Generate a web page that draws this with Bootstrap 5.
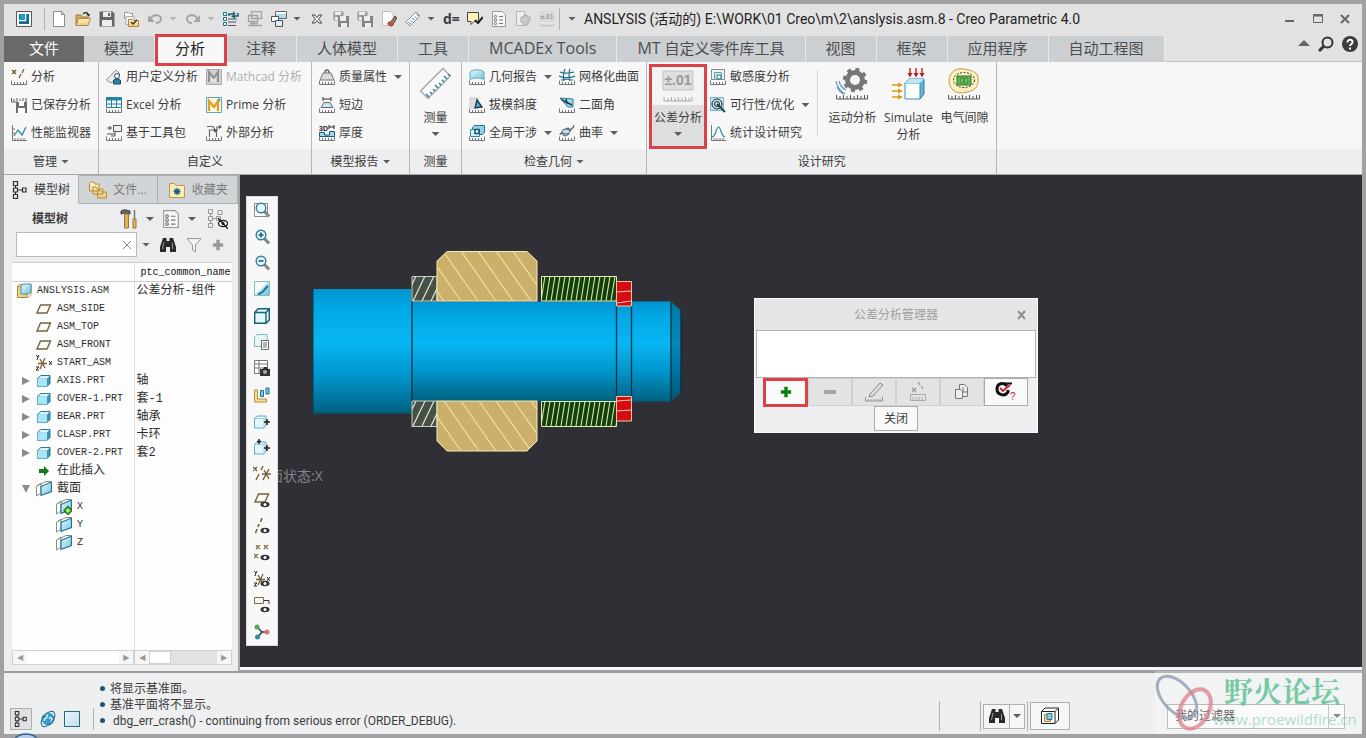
<!DOCTYPE html>
<html lang="zh-CN">
<head>
<meta charset="utf-8">
<meta name="viewport" content="width=device-width, initial-scale=1">
<title>ANSLYSIS - Creo Parametric 4.0</title>
<link href="https://cdn.jsdelivr.net/npm/bootstrap@5.3.0/dist/css/bootstrap.min.css" rel="stylesheet">
<style>
:root{--ui:"Open Sans","Noto Sans CJK SC",sans-serif;--narrow:Roboto,"Noto Sans CJK SC",sans-serif;--line:#b4b6b8;--mark:#db4146}
body{font:12px/16px var(--ui);color:#3c3c3c;background:#a1a1a1;overflow:hidden}
.shell{min-height:100vh;padding:4px}
.btn{--bs-btn-padding-x:0;--bs-btn-padding-y:0;--bs-btn-border-width:0;--bs-btn-border-radius:0;--bs-btn-font-size:12px;--bs-btn-line-height:16px;--bs-btn-color:#3c3c3c;--bs-btn-disabled-opacity:1}
svg{display:block;flex:none;fill:none}
.ic{width:16px;height:16px}
.ic-lg{width:34px;height:34px}
.tri{width:8px;height:4px;background:#5c5c5c;clip-path:polygon(0 0,100% 0,50% 100%);flex:none;display:block}
.tri-soft{background:#b5b5b5}
.redbox{position:absolute;border:3px solid var(--mark);pointer-events:none}
/* title bar */
.titlebar{height:32px;background:#e2e2e2;padding:0 12px 3px;gap:8px}
.titlebar .tri{margin-left:-2px}
.titlebar .vsep{margin:0 -2px 0 4px}
.titlebar .vsep.tail{margin:0 2px 0 -4px}
.vsep{width:1px;height:22px;background:#b0b0b0;flex:none}
.app-title{font:14px/20px var(--narrow);color:#222}
.dformula{font-weight:700;font-size:14px;line-height:16px;width:16px}
/* ribbon tabs */
.tabstrip{height:26px;background:#e2e2e2;border-bottom:1px solid #c3c5c6}
.tabstrip .nav-link{padding:0 20px;height:26px;line-height:24px;font-size:15px;color:#4b4e50;background:#cccfd2;border-right:1px solid #e9eaea;border-radius:0;position:relative;white-space:nowrap}
.tabstrip .file{background:#696969;color:#fff;padding:0 25px;border:0}
.tabstrip .active{background:#f7f7f7;color:#222}
.tabstrip .redbox{inset:-2px -2px -4px 0;z-index:2}
.tabstrip .latin{font-size:16px}
.helpers{gap:8px;padding-right:4px}
/* ribbon */
.ribbon{background:linear-gradient(#f7f7f7 87px,#eceef0 87px);border-bottom:1px solid #a8a8a8}
.grp{border-right:1px solid var(--line)}
.grp-body{height:87px;padding:0 7px}
.grp-name{height:25px;line-height:25px;text-align:center}
.cmds{display:grid;grid-template-rows:repeat(3,28px);grid-auto-flow:column;column-gap:7px;padding-top:1px}
.custom .cmds{column-gap:8px;padding-right:2px}
.cmd{display:flex;align-items:center;gap:4px;text-align:left;white-space:nowrap}
.cmd .tri{margin-left:3px}
.cmd:disabled{color:#aeb0b2}
.big{display:flex;flex-direction:column;align-items:center;width:56px;padding-top:5px;line-height:17px}
.measure{width:51px}
.big .ic-lg{margin-bottom:8px}
.big .tri{margin-top:6px}
.tol{width:58px;padding-top:2px;margin:2px 3px 0 -5px;background:linear-gradient(#f4f4f4 38px,#dcdee0 38px);border:3px solid var(--mark);height:85px}
.tol .ic-lg{margin-bottom:6px}
.divide{height:66px;margin:8px 6px 0 8px;opacity:.5}
.study{padding-right:4px}
/* side panel */
.side{width:236px;background:#ebedef;border-right:2px solid #a6a6a6;flex:none}
.sidetabs .btn{flex:1 1 82px;height:29px;gap:6px;display:flex;align-items:center;justify-content:center;color:#77797b;background:#d2d5d8;border:1px solid #aeb0b2;border-left-width:0}
.sidetabs .btn.on{flex-basis:77px;background:#ebedef;color:#3c3c3c;border-color:#ebedef #aeb0b2 #ebedef}
.treehead{padding:5px 10px 0 28px;gap:8px}
.finder{padding:3px 0 0 12px;gap:10px}
.finder>.tri{margin-left:-5px}
.search{width:121px;border:1px solid #b8babc;background:#fff;height:25px}
.search input{border:0;width:100px;outline:0;background:none}
.dim{--bs-btn-color:#999}
.treebox{background:#fdfdfd;margin:5px 6px 6px 8px}
.tree{table-layout:fixed;width:100%;height:100%;border-collapse:collapse;font:10px/12px "Liberation Mono","Noto Sans CJK SC",monospace;color:#2e2e2e}
.tree th,.tree td{height:18px;padding:0;white-space:nowrap;overflow:hidden;font-weight:400}
.tree th{height:19px;border-bottom:1px solid #c9cbcd;border-top:1px solid #c9cbcd;padding:2px 0 0 6px;color:#111}
.tree th+th,.tree td+td{border-left:1px solid #dcdedf}
.tree td+td{padding-left:2px;font-size:12px}
.tree .zh{font-size:12px}
.tree .rest td{height:auto}
.node{display:flex;align-items:center;gap:5px;height:18px}
.lv0{padding-left:4px}.lv1{padding-left:24px}.lv2{padding-left:44px}.exp{padding-left:9px}
.twist{width:10px;height:10px}
.sbar{flex:97;height:15px;background:#e0e2e3;border:1px solid #cfd1d3;display:flex;justify-content:space-between}
.sbar-tree{flex:122;background:#fff}
.sbar span{width:14px;background:#f6f6f6;color:#999;font:8px/13px "DejaVu Sans",sans-serif;text-align:center}
.sbar .thumb{width:22px;background:#fff;border:1px solid #cfd1d3}
/* graphics area */
.view{background:#302f36;position:relative;border-bottom:3px solid #f6f6f6;margin-bottom:1px}
.viewbar{width:32px;min-height:450px;background:#f8f8f9;border:1px solid #dcdcdc;margin:21px 34px 0 6px;position:relative;z-index:1}
.model{width:372px;height:202px;margin-top:75px}
.statelabel{position:absolute;left:29px;top:291px;font-size:14px;line-height:20px;color:#84848a}
.dlg{position:absolute;left:514px;top:123px;width:284px;background:#eeeff0;border:1px solid #fafafa;padding:0 1px 1px}
.dlg-title{height:31px;background:#e5e6e7;color:#9d9fa1;margin:0 -1px;position:relative}
.dlg-title .btn{position:absolute;right:11px;top:8px}
.dlg textarea{display:block;width:100%;height:48px;border:1px solid #b0b2b4;resize:none;outline:0;background:#fff}
.tools .btn{width:44px;height:28px;display:flex;align-items:center;justify-content:center;background:#e2e3e4;border:1px solid #cdcfd1;position:relative}
.tools .lit,.closebtn{background:#f9f9f9!important;border:1px solid #a9abad!important}
.tools .add{color:#0f7d14}
.tools .redbox{inset:-1px -1px -2px -2px;z-index:1}
.closebtn{width:44px;height:25px}
/* status bar */
.status{background:#edeff1;border-top:2px solid #9b9b9b;height:63px;position:relative}
.toggles{gap:7px;padding:0 8px 4px 6px}
.toggles .vsep{margin-left:6px}
.toggles .sq{width:22px;height:22px;background:#dfe1e3}
.msgs{font-family:var(--narrow);padding-bottom:5px;margin-left:-2px}
.msgs li{line-height:16px;padding-left:10px;position:relative}
.msgs li::before{content:"";position:absolute;left:0;top:5px;width:5px;height:5px;border-radius:50%;background:#1f5468}
.sq{border:1px solid #aeb0b2;background:#f5f6f7;display:flex;align-items:center;justify-content:center}
.picks{gap:2px;padding:0 17px 3px 0}
.picks .vsep{height:30px}
.picks .vsep:first-child{margin-right:38px}
.find{width:27px;height:25px}
.findopt{width:15px;border-left:0}
.pick{width:40px;height:28px;margin-right:95px}
.filter{width:178px;height:25px;font-size:12px;line-height:16px;border:1px solid #a0a2a4;border-radius:0;background:#f8f8f8 linear-gradient(#b0b2b4,#b0b2b4) right 15px top 0/1px 100% no-repeat;padding:0 7px;color:#222;appearance:none}
.logo{position:absolute;right:0;top:-2px;width:207px;height:63px;background:#ffffff48;overflow:hidden;pointer-events:none}
.logo-name{position:absolute;left:69px;top:2px;font:700 29px/36px "Noto Serif CJK SC","Noto Sans CJK SC",serif;color:#48bb83bb;white-space:nowrap}
.logo-url{position:absolute;left:58px;top:38px;font:15px/20px var(--ui);color:#6cc4a08c}
.orb{position:absolute;left:10px;bottom:-1px;z-index:3}
</style>
</head>
<body>
<svg width="0" height="0" class="position-absolute" aria-hidden="true">
<defs>
<linearGradient id="gb" x1="0" y1="0" x2="1" y2="1"><stop stop-color="#eafaff"/><stop offset="1" stop-color="#6fc3de"/></linearGradient>
<linearGradient id="gy" x1="0" y1="0" x2="0" y2="1"><stop stop-color="#fdf3c8"/><stop offset="1" stop-color="#edc879"/></linearGradient>
<linearGradient id="gs" x1="0" y1="0" x2="0" y2="1"><stop stop-color="#0294cf"/><stop offset=".15" stop-color="#00a8e4"/><stop offset=".42" stop-color="#08b6f4"/><stop offset=".7" stop-color="#0095cb"/><stop offset="1" stop-color="#00607f"/></linearGradient>
</defs>
</svg>
<svg class="d-none" aria-hidden="true">
<symbol id="rul" viewBox="0 0 16 16"><path d="M.5 11.500V15.500H15.500V11.500M3.500 15v-2M6.500 15v-2M9.500 15v-2M12.500 15v-2" stroke="#777"/></symbol>
<symbol id="app" viewBox="0 0 16 16"><path d="M.5.5h15v15H.5z" fill="#fff" stroke="#555"/><path d="M3 3h10v10H3z" fill="#126b8f"/><path d="M3 9.500h6.500V3" stroke="#fff" stroke-width="1.500"/><path d="M4 3h5v6H4z" fill="#1a9ed0"/></symbol>
<symbol id="new" viewBox="0 0 16 16"><path d="M2.500.5h8l3 3v12h-11z" fill="#fff" stroke="#8d8d8d"/><path d="M10.500.5v3h3" stroke="#8d8d8d"/></symbol>
<symbol id="open" viewBox="0 0 16 16"><path d="M1 14V4h5l1 2h6v2" fill="#dba84f" stroke="#a9803a"/><path d="M1 14.500 3.500 7.500h12L13 14.500z" fill="url(#gy)" stroke="#b38a41"/><path d="M8 3c2-2 4-2 5 0" stroke="#333" stroke-width="1.500"/><path d="M11 3h4l-1 3z" fill="#333"/></symbol>
<symbol id="save" viewBox="0 0 16 16"><path d="M.5.5h13l2 2v13H.5z" fill="#666" /><path d="M4 1h8v5H4zM3 9h10v6H3z" fill="#eee"/><path d="M9 2h2v3H9z" fill="#666"/></symbol>
<symbol id="fchk" viewBox="0 0 16 16"><path d="M1.500 1.500h4l1 1h3v5h-8z" fill="#fff" stroke="#999"/><path d="M3 5.500h8v8H3z" fill="#f6f6f6" stroke="#aaa"/><path d="M5.500 15.500v-7h4l1 1h5v6z" fill="url(#gy)" stroke="#b08a3c"/><path d="m8 11 2 2 4-4" stroke="#333" stroke-width="1.500"/></symbol>
<symbol id="undo" viewBox="0 0 16 16"><path d="M3 8c4-6 11-4 11 0 0 3-3 4-5 4" stroke="#a5a5a5" stroke-width="2"/><path d="M1 4v7h7z" fill="#a5a5a5"/></symbol>
<symbol id="redo" viewBox="0 0 16 16"><path d="M13 8C9 2 2 4 2 8c0 3 3 4 5 4" stroke="#a5a5a5" stroke-width="2"/><path d="M15 4v7H8z" fill="#a5a5a5"/></symbol>
<symbol id="regen" viewBox="0 0 16 16"><path d="M.5 1.500h3v3h-3zM.5 6.500h3v3h-3zM.5 11.500h3v3h-3z" fill="#fff" stroke="#1b7390"/><path d="M5 8h9M5 11h8M5 14.500h8" stroke="#555"/><path d="M6 5V3h5M15 2v3h-5" stroke="#17607a" stroke-width="1.500"/><path d="m10 0 3 3-3 2zM12 3 8 5l4 3z" fill="#17607a"/></symbol>
<symbol id="mon" viewBox="0 0 16 16"><path d="M4.500.5h10v7h-10zM1.500 4.500h9v6h-9zM1 14.500h14M6 10v4M3 12.500h8" stroke="#a3a3a3" stroke-width="1.300"/></symbol>
<symbol id="wins" viewBox="0 0 16 16"><path d="M4.500.5h11v7h-11z" fill="#fff" stroke="#666"/><path d="M5 3h10v4H5z" fill="#a5dced"/><path d="M.5 5.500h7v5h-7z" fill="#fff" stroke="#555"/><path d="M4.500 9.500h7v6h-7z" fill="#d5f1f9" stroke="#555"/></symbol>
<symbol id="xo" viewBox="0 0 16 16"><path d="M3 4h3l2 2.500L10 4h3l-3.500 4L13 12h-3L8 9.500 6 12H3l3.500-4z" fill="#fff" stroke="#444"/></symbol>
<symbol id="dsk" viewBox="0 0 16 16"><path d="M.5.5h10v9H.5z" fill="#9a9a9a"/><path d="M2 1h6v3H2zM2 6h6v3H2z" fill="#eee"/><path d="M5 5h11v11H5z" fill="#858585"/><path d="M7 5h6v5H7zM8 12h6v4H8z" fill="#eee"/></symbol>
<symbol id="ers" viewBox="0 0 16 16"><path d="M1.500.5h8l3 3v11h-11z" fill="#fff" stroke="#bbb"/><path d="m8 13 6-8 2 2-5 8z" fill="#9c7658" stroke="#6a4b36"/><path d="m6 13 2-3 4 3-2 3z" fill="#c44"/></symbol>
<symbol id="rlr" viewBox="0 0 34 34"><path d="M1.500 24 24 1.500 31.500 9 9 31.500z" fill="#fbfcfc" stroke="#a5a5a5" stroke-width="1.300"/><path d="m10 30-3-3m6 0-2-2m5-1-2-2m5-1-3-3m6 0-2-2m5-1-2-2m5-1-3-3m6 0-2-2" stroke="#277891" stroke-width="1.400"/></symbol>
<symbol id="rls" viewBox="0 0 16 16"><path d="m.7 11 10.300-10 4 4L5 15z" fill="#fbfcfc" stroke="#8a8a8a"/><path d="m5.500 13-2-2m4 0-1.500-1.500m3.500-.5-2-2m4 0L10 5.500m3.500-.5-2-2" stroke="#277891"/></symbol>
<symbol id="tgchk" viewBox="0 0 16 16"><path d="M.5 1.500h11v9H7l-3 3v-3H.5z" fill="#fff4b8" stroke="#444"/><path d="m8 9 3 3 5-6" stroke="#222" stroke-width="2"/></symbol>
<symbol id="lst" viewBox="0 0 16 16"><path d="M1.500.5h10l3 3v12h-13z" fill="#f7f7f7" stroke="#999"/><circle cx="4.500" cy="5.500" r="1.200" stroke="#777"/><circle cx="4.500" cy="9" r="1.200" stroke="#777"/><circle cx="4.500" cy="12.500" r="1.200" stroke="#777"/><path d="M8 5.500h4M8 9h4M8 12.500h4" stroke="#777"/></symbol>
<symbol id="puz" viewBox="0 0 16 16"><path d="M1.500.5h8v14h-8z" fill="#eee" stroke="#b5b5b5"/><path d="M6 6h3V4h3v2h3v4h-2v4H8v-3H6z" fill="#ccc" stroke="#aaa"/></symbol>
<symbol id="pm" viewBox="0 0 34 34"><path d="M2 2h30v19H2z" fill="#dedede" stroke="#c2c2c2"/><path d="M3 28v4h28v-4M7 32v-3M10.500 32v-4M14 32v-3M17.500 32v-4M21 32v-3M24.500 32v-4M28 32v-3" stroke="#aaa"/><text x="17" y="16" text-anchor="middle" font-family="Liberation Sans" font-size="14" font-weight="700" fill="#999">±.01</text></symbol>
<symbol id="ana" viewBox="0 0 16 16"><path d="m1 1 4 4M5 1 1 5" stroke="#805b30" stroke-width="1.500"/><path d="m13 0-2 4M10 5 8 9" stroke="#805b30" stroke-width="1.300"/><use href="#rul"/></symbol>
<symbol id="sav2" viewBox="0 0 16 16"><path d="M.5 1v4h6M3 4V2M6 4V1M9 4V2M12 4V1M15 5V1" stroke="#555"/><path d="M5 5h11v11H5z" fill="#6d6d6d"/><path d="M8 5h5v4H8zM7 11h7v5H7z" fill="#fff"/></symbol>
<symbol id="perf" viewBox="0 0 16 16"><path d="M1.500 0v15.500H16M4 15v-2M7 15v-2M10 15v-2M13 15v-2M2 4h2M2 8h2" stroke="#777"/><path d="m3 11 4-6 4 5 4-8" stroke="#278aa4" stroke-width="1.300"/></symbol>
<symbol id="usr" viewBox="0 0 16 16"><path d="M.5 11 10 1l4 4-9 9z" fill="#eee" stroke="#888"/><circle cx="11" cy="7" r="2.500" fill="#fff" stroke="#346"/><path d="M7.500 15v-3c0-3 7-3 7 0v3z" fill="#2b83ad" stroke="#245"/></symbol>
<symbol id="xls" viewBox="0 0 16 16"><path d="M.5.5h15v10H.5z" fill="#fff" stroke="#267f9b"/><path d="M.5.5h15v3H.5z" fill="#1e86a8"/><path d="M.5 7h15M5.500.5v10M10.500.5v10" stroke="#267f9b"/><use href="#rul"/></symbol>
<symbol id="kit" viewBox="0 0 16 16"><path d="M7.500.5h8v6h-8z" fill="#eee" stroke="#555"/><path d="M1 3h5M1 9h8M4 1v4" stroke="#555" stroke-width="1.200"/><path d="M9 7v4H5" stroke="#555"/><use href="#rul"/></symbol>
<symbol id="mcd" viewBox="0 0 16 16"><path d="M.5.5h15v15H.5z" fill="#d3d3d3" stroke="#aaa"/><path d="M3 13V3l5 6 4-6v10" stroke="#909090" stroke-width="2"/><path d="M6 13V9M9 13V9" stroke="#fff"/></symbol>
<symbol id="prm" viewBox="0 0 16 16"><path d="M.5.5h15v15H.5z" fill="#fff8e2" stroke="#5ba8c0"/><path d="M3 14V4l5 6 4-6v10" stroke="#e0a126" stroke-width="2.300"/><circle cx="13" cy="3" r="1.500" fill="#5a9"/></symbol>
<symbol id="ext" viewBox="0 0 16 16"><path d="M1 1.500h6l2 3M15 2h-4v4M3.500 12V5h7v7" stroke="#666" stroke-width="1.200"/><path d="m13 0 3 2-3 2zM7 5l4-1-2 4z" fill="#555"/><use href="#rul"/></symbol>
<symbol id="mass" viewBox="0 0 16 16"><path d="m1 11 3-7h8l3 7z" fill="#d9dcde" stroke="#777"/><path d="M6 4C6 0 10 0 10 4" stroke="#666" stroke-width="1.500"/><use href="#rul"/></symbol>
<symbol id="edge" viewBox="0 0 16 16"><path d="M4 0v4M12 0v4M4 2h8" stroke="#333"/><path d="M5 5.500h6l3 5H2z" fill="#c5e9f3" stroke="#667"/><use href="#rul"/></symbol>
<symbol id="thk" viewBox="0 0 16 16"><text x="0" y="6" font-family="Liberation Sans" font-size="7" font-weight="700" fill="#222">3D</text><path d="M10 0v4M15 0v4M10 2h5" stroke="#222"/><path d="M.5 7.500h5V10h5V6.500h5v5h-15z" fill="#9ed8ea" stroke="#175d76"/><use href="#rul"/></symbol>
<symbol id="geo" viewBox="0 0 16 16"><path d="M1 10.500V3c3-3 11-3 14 0v7.500c-4-2-10-2-14 0z" fill="url(#gb)" stroke="#6aa"/><use href="#rul"/></symbol>
<symbol id="drf" viewBox="0 0 16 16"><path d="M1 11V1h8v10z" fill="#ddd" stroke="#ccc"/><path d="m6 11 2-8 5 7z" fill="#49a8ca" stroke="#1c3e4c" stroke-width="1.400"/><use href="#rul"/></symbol>
<symbol id="glb" viewBox="0 0 16 16"><path d="M5.500.5h10v7l-2 2h-10v-7z" fill="#8fd1e6" stroke="#1b7694"/><path d="M1.500 4.500h9v7h-9z" fill="#d6f1f8" stroke="#2d8aa6"/><path d="M6 4.500h4v4H6z" fill="#fff" stroke="#14546a" stroke-width="1.500"/><use href="#rul"/></symbol>
<symbol id="mesh" viewBox="0 0 16 16"><path d="M1 3c4 2 10 1 14 0M0 7c5 2 11 2 16 0M2 11c4-1 8-1 12 0M6 0C4 4 4 8 5 12M11 0c-2 4-1 8 0 12" stroke="#1e7188" stroke-width="1.200"/><use href="#rul"/></symbol>
<symbol id="dih" viewBox="0 0 16 16"><path d="m1 1 13 1v8H9z" fill="#a3dced" stroke="#2a7a95"/><path d="m2 2 6 4-1-4M5 4l8 4" stroke="#173c4b" stroke-width="1.400"/><use href="#rul"/></symbol>
<symbol id="crv" viewBox="0 0 16 16"><path d="M1 10c0-5 14-3 14-10M2 8l4 3 4-2M5 5l4-2 3 3" stroke="#566e7c" stroke-width="1.300"/><ellipse cx="7" cy="6.500" rx="4" ry="2.500" fill="#bfdde9" stroke="#567"/><use href="#rul"/></symbol>
<symbol id="sen" viewBox="0 0 16 16"><path d="M1.500.5h13v10h-13z" fill="#f3f3f3" stroke="#888"/><path d="M4.500 3.500h7v7h-7z" fill="#d3edf4" stroke="#5e9fb2"/><path d="M7 6h4v4H7z" fill="#fff" stroke="#278"/><use href="#rul"/></symbol>
<symbol id="opt" viewBox="0 0 16 16"><path d="M.5.5h13v13H.5z" fill="#c7e6ef" stroke="#79b8ca"/><circle cx="7" cy="7" r="5" stroke="#222"/><circle cx="7" cy="7" r="2.500" stroke="#222"/><path d="m7 7 8 8" stroke="#1c4455" stroke-width="2"/></symbol>
<symbol id="sta" viewBox="0 0 16 16"><path d="M1.500 0v15.500H16M4 15v-2M7 15v-2M10 15v-2M13 15v-2" stroke="#777"/><path d="M2 12C6 12 6 2 8.500 2S11 12 15 12" stroke="#2c87a0" stroke-width="1.200"/></symbol>
<symbol id="motn" viewBox="0 0 34 34"><circle cx="20" cy="13" r="7.500" stroke="#777" stroke-width="5"/><circle cx="20" cy="13" r="10.500" stroke="#777" stroke-width="3.500" stroke-dasharray="4 4.250"/><path d="M1 14c1 6 4 10 9 13M4 14c1 4 3 7 7 9M2 20c2 4 3 5 6 7" stroke="#5a9ab4" stroke-width="1.200"/><path d="M1.500 28v4h31v-4M5 32v-3M8.500 32v-4M12 32v-3M15.500 32v-4M19 32v-3M22.500 32v-4M26 32v-3M29.500 32v-4" stroke="#555"/></symbol>
<symbol id="simu" viewBox="0 0 34 34"><path d="m14 16 4-4h15v15l-4 5z" fill="#62b6d3" stroke="#2b7b9b"/><path d="M14 16h15v16H14z" fill="#fbfeff" stroke="#3692b2"/><path d="m14 16 4-4h15l-4 4z" fill="#bce6f2"/><path d="M19 1v8M25 1v8M31 1v8" stroke="#c62b2b" stroke-width="1.500"/><path d="m16.500 6 2.500 4.500L21.500 6zm6 0 2.500 4.500L27.500 6zm6 0 2.500 4.500L33.500 6z" fill="#b61f1f"/><path d="M1 18h8M1 24h8M1 30h8" stroke="#d99b19" stroke-width="1.500"/><path d="m7 15.500 5 2.500-5 2.500zm0 6 5 2.500-5 2.500zm0 6 5 2.500-5 2.500z" fill="#d99b19"/></symbol>
<symbol id="elec" viewBox="0 0 34 34"><path d="M3 9C5 3 12 1 17 2s13 2 14 8-1 12-7 14-14 3-18-1S1 14 3 9z" fill="#fbf0c0" stroke="#c49a3f"/><ellipse cx="17" cy="13" rx="10.500" ry="7.500" stroke="#333" stroke-dasharray="2 1.500"/><path d="M10 9h14v9H10z" fill="#5fb54b" stroke="#2a7a27"/><path d="M14 11h2v5h-2zM18 11h2v5h-2z" fill="#d7f3c8" stroke="#2a7a27"/><path d="M1.500 28v4h31v-4M5 32v-3M8.500 32v-4M12 32v-3M15.500 32v-4M19 32v-3M22.500 32v-4M26 32v-3M29.500 32v-4" stroke="#555"/></symbol>
<symbol id="tree" viewBox="0 0 16 18"><path d="M1.500.5h4v4h-4zM1.500 7h4v4h-4zM1.500 13.500h4v4h-4zM10.500 7h3.500v4h-3.500zM3.500 4.500V7M3.500 11v2.500M5.500 9h5" stroke="#2e2e2e" stroke-width="1.200"/></symbol>
<symbol id="flds" viewBox="0 0 18 18"><path d="M.5 10V2.500L2 1h3l1 2h4v7zM4 13V6h3l1 2h6v5zM8.500 17V9.500h3l1 1.500h5v6z" fill="url(#gy)" stroke="#b88c3b"/></symbol>
<symbol id="favf" viewBox="0 0 18 16"><path d="M1.500 15.500v-14h5l1 2h9v12z" fill="#fbedbb" stroke="#c1994c"/><path d="M9 6v7M5.500 9.500h7M6.500 7l5 5M11.500 7l-5 5" stroke="#17607c" stroke-width="1.300"/></symbol>
<symbol id="ham" viewBox="0 0 18 20"><path d="M1 5V2c3-2 6-1 9 0v3H8L5 4z" fill="#666" stroke="#444"/><path d="M4.500 5h4v14h-4z" fill="#dfb05c" stroke="#9c7435"/><path d="M14.500 1v9" stroke="#777" stroke-width="1.500"/><path d="M13 10h3v9h-3z" fill="#e4b55f" stroke="#9c7435"/></symbol>
<symbol id="tvis" viewBox="0 0 20 20"><path d="M.5.5h4v4h-4zM.5 7.500h4v4h-4zM.5 14.500h4v4h-4zM8.500 7.500h4v4h-4zM10 1.500h4v4h-4zM2.500 5v2M2.500 12v2M5 9.500h3" stroke="#999"/><ellipse cx="15" cy="14.500" rx="4.500" ry="3" fill="#fff" stroke="#222" stroke-width="1.300"/><circle cx="15" cy="14.500" r="1.500" fill="#222"/><path d="m10 9 10 11" stroke="#111" stroke-width="1.300"/></symbol>
<symbol id="bino" viewBox="0 0 16 16"><path d="M3 1h3.500v3h3V1H13l3 9v5h-6v-5H6v5H0v-5z" fill="#2a2a2a"/><path d="M4 5 2.500 12M12.500 6v6" stroke="#999"/></symbol>
<symbol id="fun" viewBox="0 0 16 16"><path d="M1 1.500h14L9.500 8v7l-3-2V8z" fill="#f4f4f4" stroke="#999"/></symbol>
<symbol id="plus" viewBox="0 0 14 14"><path d="M7 1v12M1 7h12" stroke="currentColor" stroke-width="4"/></symbol>
<symbol id="asm" viewBox="0 0 16 16"><path d="M1.500 3.500H11v11H1.500z" fill="#f2d38e" stroke="#b18736"/><path d="m1.500 3.500 2-2H15v10l-3 3" stroke="#b18736"/><path d="M5 3.500 7 1h8v8l-3 2H5z" fill="url(#gb)" stroke="#3d91ad"/></symbol>
<symbol id="pln" viewBox="0 0 16 16"><path d="M4.500 4h10l-3.500 8H1z" stroke="#78613a" stroke-width="1.400"/></symbol>
<symbol id="csy" viewBox="0 0 16 16"><path d="M2 8.500h9M4 4l5 9M9 3 4 14" stroke="#7b5f33" stroke-width="1.300"/><path d="m13 6 3 4m0-4-3 4M0 0l2 2 1-2M2 2 1 5M0 12h3l-3 3h3" stroke="#222"/></symbol>
<symbol id="prt" viewBox="0 0 16 16"><path d="M1.500 5.500 5 2.500h9v8l-3 3H1.500z" fill="#3998b6" stroke="#257b98"/><path d="M1.500 5.500H11v8H1.500z" fill="#a9e5f4"/><path d="M2 5.500 5 3h8.500L11 5.500z" fill="#dbf6fb"/></symbol>
<symbol id="arr" viewBox="0 0 12 12"><path d="M1 4h5V1l5 5-5 5V8H1z" fill="#0d7c12"/></symbol>
<symbol id="sec" viewBox="0 0 16 16"><path d="M.5 5.500 5 2v10l-4.500 3z" fill="#fff" stroke="#888"/><path d="M5 5.500 15.500 1v9.500L5 14.500z" fill="url(#gb)" stroke="#217290" stroke-width="1.200"/><path d="M.5 5 10 .5h5.500" stroke="#888"/></symbol>
<symbol id="secx" viewBox="0 0 16 16"><use href="#sec"/><path d="m12 7.500 4 4-4 4-4-4z" fill="#7ddc39" stroke="#1f7212" stroke-width="1.300"/><circle cx="12" cy="11.500" r="1" fill="#fff"/></symbol>
<symbol id="mag" viewBox="0 0 16 16"><path d="m10 9 5 5.500" stroke="#888" stroke-width="3"/><circle cx="7" cy="6" r="4.800" fill="#e9f8fc" stroke="#2d829e" stroke-width="1.400"/></symbol>
<symbol id="fit" viewBox="0 0 16 16"><path d="M.5 1.500h13v13H.5z" fill="#fff" stroke="#8a8a8a"/><use href="#mag"/></symbol>
<symbol id="zin" viewBox="0 0 16 16"><use href="#mag"/><path d="M7 3.500v5M4.500 6h5" stroke="#185c74" stroke-width="1.600"/></symbol>
<symbol id="zout" viewBox="0 0 16 16"><use href="#mag"/><path d="M4.500 6h5" stroke="#185c74" stroke-width="1.600"/></symbol>
<symbol id="rep" viewBox="0 0 16 16"><path d="M.5.5h15v14H.5z" fill="url(#gb)" stroke="#8bb"/><path d="M1 1v13L14 1z" fill="#f7fbfc"/><path d="M4 13c5 0 6-5 10-8" stroke="#156c8c" stroke-width="2"/></symbol>
<symbol id="box" viewBox="0 0 16 16"><path d="M.7 4.500 4 .8h11.300V12L12 15.300H.7zM.7 4.500H12v10.800M12 4.500l3.300-3.700" fill="#e3f6fb" stroke="#145f7c" stroke-width="1.400"/></symbol>
<symbol id="vw" viewBox="0 0 16 16"><path d="M.5 3.500 3 .5h10v9l-3 3H.5z" fill="#e5f7fb" stroke="#7bb8c9"/><path d="M7.500 6.500h7v9h-7z" fill="#fff" stroke="#666"/><path d="M9 9h4M9 11h4M9 13h4" stroke="#666"/></symbol>
<symbol id="cam" viewBox="0 0 16 16"><path d="M.5.5h13v13H.5zM.5 4h13M.5 8h13M5 .5v13" fill="#fff" stroke="#777"/><path d="M6 9h3l1-2h3l1 2h2v7H6z" fill="#333"/><circle cx="11" cy="12" r="2" fill="#aaa"/></symbol>
<symbol id="lay" viewBox="0 0 16 16"><path d="M.5 3h3v9h9v3h-12z" fill="#f5dc9f" stroke="#b98b39"/><path d="M6.500 3.500h3v6h-3zM12 1h3v6h-3z" fill="#7dc8e0" stroke="#1a7190"/></symbol>
<symbol id="exr" viewBox="0 0 16 16"><path d="M.5 5.500 3 3h9v9l-2 3H.5z" fill="#e3f6fb" stroke="#65a9bf"/><path d="M.5 5.500H10V15M10 5.500 12 3" stroke="#9ccfde"/><path d="M13 6v6M10 9h6" stroke="#222" stroke-width="1.600"/></symbol>
<symbol id="exu" viewBox="0 0 16 16"><use href="#exr"/><path d="M5 0v5M3 2.500h4" stroke="#222" stroke-width="1.500"/></symbol>
<symbol id="dtm" viewBox="0 0 18 16"><path d="m0 1 4 4M4 1 0 5M10 0 8 4M6 8l-3 6M9 8h9M11 4l5 9M16 3l-6 11" stroke="#7b5f33" stroke-width="1.400"/></symbol>
<symbol id="eye" viewBox="0 0 16 16"><ellipse cx="11" cy="12.500" rx="4.500" ry="2.800" fill="#333"/><circle cx="11" cy="12.500" r="1.500" fill="#fff"/></symbol>
<symbol id="epl" viewBox="0 0 16 16"><path d="M4.500 2h10L11 10H1z" stroke="#78613a" stroke-width="1.400"/><use href="#eye"/></symbol>
<symbol id="eax" viewBox="0 0 16 16"><path d="M8 0 6.500 4M5 6 4 9M3 11l-1.500 4" stroke="#78613a" stroke-width="1.600"/><use href="#eye"/></symbol>
<symbol id="ept" viewBox="0 0 16 16"><path d="m2 0 4 4m0-4L2 4m8-4 4 4m0-4-4 4M0 9l4 4m0-4-4 4" stroke="#8a673a" stroke-width="1.400"/><use href="#eye"/></symbol>
<symbol id="ecs" viewBox="0 0 16 16"><use href="#csy"/><use href="#eye"/></symbol>
<symbol id="ean" viewBox="0 0 16 16"><path d="M.5.5h9v6h-9z" stroke="#8a673a"/><path d="M10 3.500h5V7" stroke="#333"/><use href="#eye"/></symbol>
<symbol id="spin" viewBox="0 0 16 16"><path d="M3 3l5 5M8 8h5M8 8l-4 5" stroke="#234" stroke-width="1.400"/><circle cx="3" cy="3" r="2.500" fill="#4cac57"/><circle cx="13" cy="8" r="2.500" fill="#e0727b"/><circle cx="3.500" cy="13" r="2.500" fill="#338aa8"/></symbol>
<symbol id="pen" viewBox="0 0 20 20"><path d="m6 12 10-11 3 2L9 14l-4 1z" fill="#ddd" stroke="#888"/><path d="M1.500 15v4h17v-4M4 19v-2M7 19v-2M10 19v-2M13 19v-2M16 19v-2" stroke="#999"/></symbol>
<symbol id="xr" viewBox="0 0 18 20"><path d="m3 6 4 4m0-4-4 4M9 0l2 3M12 4l2 3" stroke="#999" stroke-width="1.300"/><path d="M1.500 12.500h15v6h-15zM4 18v-3M7 18v-3M10 18v-3M13 18v-3" stroke="#aaa"/></symbol>
<symbol id="cpy" viewBox="0 0 16 16"><path d="M5.500.5h5l3 3v9h-8z" fill="#eee" stroke="#777"/><path d="M1.500 5.500h5l2 2v7h-7z" fill="#eee" stroke="#777"/><path d="M9 3v5h4" stroke="#777"/></symbol>
<symbol id="gchk" viewBox="0 0 22 20"><path d="M12 4C9 0 2 1 2 7s8 8 11 3V8" stroke="#111" stroke-width="3"/><path d="M9 1.500h8" stroke="#111" stroke-width="2"/><path d="m5 6 3 3 7-6" stroke="#d32334" stroke-width="2"/><text x="15" y="18" font-family="Liberation Sans" font-size="10" fill="#c12331">?</text></symbol>
<symbol id="globe" viewBox="0 0 18 18"><circle cx="9" cy="9" r="6.500" fill="#3b9fcb"/><path d="M5 5c3-2 4 0 3 2s-3 1-3 4M10 8c3-1 4 2 2 5" stroke="#d8f3fb" stroke-width="1.500"/><ellipse cx="9" cy="9" rx="9" ry="5" transform="rotate(-50 9 9)" stroke="#205d82"/></symbol>
<symbol id="cubes" viewBox="0 0 18 18"><path d="M.5 4.500 4 1h13.500v12L14 16.500H.5zM.5 4.500H14v12M14 4.500 17.500 1" fill="#fff" stroke="#222"/><path d="M3.500 7.500h6v7h-6z" fill="#f4d692" stroke="#b18736"/><path d="M6 6.500h5v6H6z" fill="#80cbe2" stroke="#1d7b9b"/></symbol>
</svg>

<div class="shell d-flex flex-column">
<header>
<div class="titlebar d-flex align-items-center">
<svg class="ic"><use href="#app"/></svg><span class="vsep"></span>
<button class="btn" aria-label="新建"><svg class="ic"><use href="#new"/></svg></button>
<button class="btn" aria-label="打开"><svg class="ic"><use href="#open"/></svg></button>
<button class="btn" aria-label="保存"><svg class="ic"><use href="#save"/></svg></button>
<button class="btn" aria-label="检查"><svg class="ic"><use href="#fchk"/></svg></button>
<button class="btn" aria-label="撤销"><svg class="ic"><use href="#undo"/></svg></button><i class="tri tri-soft"></i>
<button class="btn" aria-label="重做"><svg class="ic"><use href="#redo"/></svg></button><i class="tri tri-soft"></i>
<button class="btn" aria-label="重新生成"><svg class="ic"><use href="#regen"/></svg></button>
<button class="btn" aria-label="激活"><svg class="ic"><use href="#mon"/></svg></button>
<button class="btn" aria-label="窗口"><svg class="ic"><use href="#wins"/></svg></button><i class="tri"></i>
<button class="btn" aria-label="关闭窗口"><svg class="ic"><use href="#xo"/></svg></button>
<button class="btn" aria-label="保存副本"><svg class="ic"><use href="#dsk"/></svg></button>
<button class="btn" aria-label="备份"><svg class="ic"><use href="#dsk"/></svg></button>
<button class="btn" aria-label="拭除"><svg class="ic"><use href="#ers"/></svg></button>
<button class="btn" aria-label="测量"><svg class="ic"><use href="#rls"/></svg></button><i class="tri"></i>
<button class="btn dformula" aria-label="关系">d=</button>
<button class="btn" aria-label="注释"><svg class="ic"><use href="#tgchk"/></svg></button>
<button class="btn" aria-label="参数"><svg class="ic"><use href="#lst"/></svg></button>
<button class="btn" aria-label="族表"><svg class="ic"><use href="#puz"/></svg></button>
<button class="btn" aria-label="公差"><svg class="ic"><use href="#pm"/></svg></button>
<span class="vsep tail"></span><i class="tri"></i>
<span class="app-title text-nowrap">ANSLYSIS (活动的) E:\WORK\01 Creo\m\2\anslysis.asm.8 - Creo Parametric 4.0</span>
<span class="ms-auto d-flex align-items-center gap-3">
<button class="btn" aria-label="最小化"><svg width="12" height="12"><path d="M1 8h9" stroke="#666" stroke-width="2"/></svg></button>
<button class="btn" aria-label="最大化"><svg width="12" height="12"><path d="M1.500 1.500h9v8h-9zM1 3h10" stroke="#666"/><path d="M1 2h10" stroke="#666" stroke-width="2"/></svg></button>
<button class="btn" aria-label="关闭"><svg width="10" height="10"><path d="m1 1 8 8M9 1 1 9" stroke="#666" stroke-width="2"/></svg></button>
</span>
</div>
<nav class="tabstrip nav flex-nowrap">
<a class="nav-link file" href="#">文件</a><a class="nav-link" href="#">模型</a><a class="nav-link active" href="#">分析<span class="redbox"></span></a><a class="nav-link" href="#">注释</a><a class="nav-link" href="#">人体模型</a><a class="nav-link" href="#">工具</a><a class="nav-link latin" href="#">MCADEx Tools</a><a class="nav-link" href="#"><span class="latin">MT</span> 自定义零件库工具</a><a class="nav-link" href="#">视图</a><a class="nav-link" href="#">框架</a><a class="nav-link" href="#">应用程序</a><a class="nav-link" href="#">自动工程图</a>
<span class="helpers ms-auto d-flex align-items-start">
<svg width="12" height="16"><path d="M0 10 6 4l6 6z" fill="#666"/></svg>
<svg width="16" height="16"><circle cx="9.500" cy="6.500" r="5" stroke="#333" stroke-width="2"/><path d="m6 10-5 5" stroke="#333" stroke-width="3"/></svg>
<svg width="16" height="16"><circle cx="8" cy="8" r="8" fill="#3b3b3b"/><path d="M5.500 6.500c0-4 5-3 5-.5S8 8 8 10" stroke="#fff" stroke-width="2"/><path d="M8 11.500v2" stroke="#fff" stroke-width="2"/></svg>
</span>
</nav>
<div class="ribbon d-flex">
<section class="grp"><div class="grp-body"><div class="cmds">
<button class="btn cmd"><svg class="ic"><use href="#ana"/></svg>分析</button>
<button class="btn cmd"><svg class="ic"><use href="#sav2"/></svg>已保存分析</button>
<button class="btn cmd"><svg class="ic"><use href="#perf"/></svg>性能监视器</button></div></div>
<div class="grp-name d-flex justify-content-center align-items-center gap-1">管理<i class="tri"></i></div></section>
<section class="grp custom"><div class="grp-body"><div class="cmds">
<button class="btn cmd"><svg class="ic"><use href="#usr"/></svg>用户定义分析</button>
<button class="btn cmd"><svg class="ic"><use href="#xls"/></svg>Excel 分析</button>
<button class="btn cmd"><svg class="ic"><use href="#kit"/></svg>基于工具包</button>
<button class="btn cmd" disabled><svg class="ic"><use href="#mcd"/></svg>Mathcad 分析</button>
<button class="btn cmd"><svg class="ic"><use href="#prm"/></svg>Prime 分析</button>
<button class="btn cmd"><svg class="ic"><use href="#ext"/></svg>外部分析</button></div></div>
<div class="grp-name">自定义</div></section>
<section class="grp"><div class="grp-body"><div class="cmds">
<button class="btn cmd"><svg class="ic"><use href="#mass"/></svg>质量属性<i class="tri"></i></button>
<button class="btn cmd"><svg class="ic"><use href="#edge"/></svg>短边</button>
<button class="btn cmd"><svg class="ic"><use href="#thk"/></svg>厚度</button></div></div>
<div class="grp-name d-flex justify-content-center align-items-center gap-1">模型报告<i class="tri"></i></div></section>
<section class="grp"><div class="grp-body px-0"><button class="btn big measure"><svg class="ic-lg"><use href="#rlr"/></svg>测量<i class="tri"></i></button></div>
<div class="grp-name">测量</div></section>
<section class="grp"><div class="grp-body"><div class="cmds">
<button class="btn cmd"><svg class="ic"><use href="#geo"/></svg>几何报告<i class="tri"></i></button>
<button class="btn cmd"><svg class="ic"><use href="#drf"/></svg>拔模斜度</button>
<button class="btn cmd"><svg class="ic"><use href="#glb"/></svg>全局干涉<i class="tri"></i></button>
<button class="btn cmd"><svg class="ic"><use href="#mesh"/></svg>网格化曲面</button>
<button class="btn cmd"><svg class="ic"><use href="#dih"/></svg>二面角</button>
<button class="btn cmd"><svg class="ic"><use href="#crv"/></svg>曲率<i class="tri"></i></button></div></div>
<div class="grp-name d-flex justify-content-center align-items-center gap-1">检查几何<i class="tri"></i></div></section>
<section class="grp"><div class="grp-body study d-flex">
<button class="btn big tol"><svg class="ic-lg"><use href="#pm"/></svg>公差分析<i class="tri"></i></button>
<div class="cmds">
<button class="btn cmd"><svg class="ic"><use href="#sen"/></svg>敏感度分析</button>
<button class="btn cmd"><svg class="ic"><use href="#opt"/></svg>可行性/优化<i class="tri"></i></button>
<button class="btn cmd"><svg class="ic"><use href="#sta"/></svg>统计设计研究</button></div>
<span class="vsep divide"></span>
<button class="btn big"><svg class="ic-lg"><use href="#motn"/></svg>运动分析</button>
<button class="btn big"><svg class="ic-lg"><use href="#simu"/></svg>Simulate<br>分析</button>
<button class="btn big"><svg class="ic-lg"><use href="#elec"/></svg>电气间隙</button></div>
<div class="grp-name">设计研究</div></section>
</div>
</header>

<main class="d-flex flex-grow-1">
<aside class="side d-flex flex-column">
<div class="sidetabs d-flex">
<button class="btn on"><svg width="16" height="18"><use href="#tree"/></svg>模型树</button>
<button class="btn"><svg width="18" height="18"><use href="#flds"/></svg>文件...</button>
<button class="btn"><svg width="18" height="16"><use href="#favf"/></svg>收藏夹</button>
</div>
<div class="treehead d-flex align-items-center">
<strong class="me-auto">模型树</strong>
<button class="btn" aria-label="设置"><svg width="18" height="20"><use href="#ham"/></svg></button><i class="tri"></i>
<button class="btn" aria-label="显示"><svg width="18" height="20"><use href="#lst"/></svg></button><i class="tri me-1"></i>
<button class="btn" aria-label="隐藏"><svg width="20" height="20"><use href="#tvis"/></svg></button>
</div>
<div class="finder d-flex align-items-center">
<div class="search d-flex align-items-center"><input aria-label="搜索"><button class="btn" aria-label="清除"><svg width="18" height="12"><path d="m6 2 8 8m0-8-8 8" stroke="#888"/></svg></button></div>
<i class="tri"></i>
<button class="btn" aria-label="查找"><svg class="ic"><use href="#bino"/></svg></button>
<button class="btn" aria-label="过滤"><svg class="ic"><use href="#fun"/></svg></button>
<button class="btn dim" aria-label="添加"><svg width="12" height="12"><use href="#plus"/></svg></button>
</div>
<div class="treebox flex-grow-1 d-flex flex-column"><div class="flex-grow-1">
<table class="tree"><colgroup><col width="122"><col></colgroup>
<thead><tr><th></th><th>ptc_common_name</th></tr></thead>
<tbody>
<tr><td><div class="node lv0"><svg class="ic"><use href="#asm"/></svg>ANSLYSIS.ASM</div></td><td>公差分析-组件</td></tr>
<tr><td><div class="node lv1"><svg class="ic"><use href="#pln"/></svg>ASM_SIDE</div></td><td></td></tr>
<tr><td><div class="node lv1"><svg class="ic"><use href="#pln"/></svg>ASM_TOP</div></td><td></td></tr>
<tr><td><div class="node lv1"><svg class="ic"><use href="#pln"/></svg>ASM_FRONT</div></td><td></td></tr>
<tr><td><div class="node lv1"><svg class="ic"><use href="#csy"/></svg>START_ASM</div></td><td></td></tr>
<tr><td><div class="node exp"><svg class="twist"><path d="m1 1 8 4-8 4z" fill="#8b8b8b"/></svg><svg class="ic"><use href="#prt"/></svg>AXIS.PRT</div></td><td>轴</td></tr>
<tr><td><div class="node exp"><svg class="twist"><path d="m1 1 8 4-8 4z" fill="#8b8b8b"/></svg><svg class="ic"><use href="#prt"/></svg>COVER-1.PRT</div></td><td>套-1</td></tr>
<tr><td><div class="node exp"><svg class="twist"><path d="m1 1 8 4-8 4z" fill="#8b8b8b"/></svg><svg class="ic"><use href="#prt"/></svg>BEAR.PRT</div></td><td>轴承</td></tr>
<tr><td><div class="node exp"><svg class="twist"><path d="m1 1 8 4-8 4z" fill="#8b8b8b"/></svg><svg class="ic"><use href="#prt"/></svg>CLASP.PRT</div></td><td>卡环</td></tr>
<tr><td><div class="node exp"><svg class="twist"><path d="m1 1 8 4-8 4z" fill="#8b8b8b"/></svg><svg class="ic"><use href="#prt"/></svg>COVER-2.PRT</div></td><td>套2</td></tr>
<tr><td><div class="node lv1 zh"><svg width="16" height="12"><use href="#arr"/></svg>在此插入</div></td><td></td></tr>
<tr><td><div class="node exp zh"><svg class="twist"><path d="m1 1 4 8 4-8z" fill="#8b8b8b"/></svg><svg class="ic"><use href="#sec"/></svg>截面</div></td><td></td></tr>
<tr><td><div class="node lv2"><svg class="ic"><use href="#secx"/></svg>X</div></td><td></td></tr>
<tr><td><div class="node lv2"><svg class="ic"><use href="#sec"/></svg>Y</div></td><td></td></tr>
<tr><td><div class="node lv2"><svg class="ic"><use href="#sec"/></svg>Z</div></td><td></td></tr>
<tr class="rest"><td></td><td></td></tr>
</tbody></table></div>
<div class="d-flex"><div class="sbar sbar-tree"><span>◀</span><span>▶</span></div><div class="sbar"><span>◀</span><span class="thumb me-auto"></span><span>▶</span></div></div>
</div>
</aside>
<section class="view flex-grow-1 d-flex align-items-start">
<div class="statelabel">面状态:X</div>
<div class="viewbar d-flex flex-column align-items-center justify-content-around">
<button class="btn" aria-label="重新调整"><svg class="ic"><use href="#fit"/></svg></button>
<button class="btn" aria-label="放大"><svg class="ic"><use href="#zin"/></svg></button>
<button class="btn" aria-label="缩小"><svg class="ic"><use href="#zout"/></svg></button>
<button class="btn" aria-label="重画"><svg class="ic"><use href="#rep"/></svg></button>
<button class="btn" aria-label="显示样式"><svg class="ic"><use href="#box"/></svg></button>
<button class="btn" aria-label="已保存方向"><svg class="ic"><use href="#vw"/></svg></button>
<button class="btn" aria-label="视图管理器"><svg class="ic"><use href="#cam"/></svg></button>
<button class="btn" aria-label="图层"><svg class="ic"><use href="#lay"/></svg></button>
<button class="btn" aria-label="截面右"><svg class="ic"><use href="#exr"/></svg></button>
<button class="btn" aria-label="截面上"><svg class="ic"><use href="#exu"/></svg></button>
<button class="btn" aria-label="基准显示"><svg width="18" height="16"><use href="#dtm"/></svg></button>
<button class="btn" aria-label="平面显示"><svg class="ic"><use href="#epl"/></svg></button>
<button class="btn" aria-label="轴显示"><svg class="ic"><use href="#eax"/></svg></button>
<button class="btn" aria-label="点显示"><svg class="ic"><use href="#ept"/></svg></button>
<button class="btn" aria-label="坐标系显示"><svg class="ic"><use href="#ecs"/></svg></button>
<button class="btn" aria-label="注释显示"><svg class="ic"><use href="#ean"/></svg></button>
<button class="btn" aria-label="旋转中心"><svg class="ic"><use href="#spin"/></svg></button>
</div>
<svg class="model" viewBox="312 250 372 202" role="img" aria-label="轴组件截面">
<defs>
<clipPath id="c1"><path d="M412 276.500h25V301h-25zM412 401h25v25.500h-25z"/></clipPath>
<clipPath id="c2"><path d="M437 301v-40l10-9.500h80l10 9.500v40zM437 401v40l10 10h80l10-10v-40z"/></clipPath>
<pattern id="h3" width="5" height="25" patternUnits="userSpaceOnUse" x="541" y="276"><path d="M0 25 4 0M5 25 9 0M-5 25-1 0" stroke="#d6e69a" stroke-width="1.100"/></pattern>
</defs>
<path d="M313 289h99v124.500h-99z" fill="url(#gs)"/><path d="M313 289v124.500" stroke="#063d52"/>
<path d="M412 301.500h259v100H412z" fill="url(#gs)"/>
<path d="M671 301.500 681 311v81l-10 9.500z" fill="url(#gs)"/><path d="M671 301.500 681 311v81l-10 9.500z" fill="#00415a" opacity=".4"/>
<path d="M412 289v124M616.500 301v100M631.500 301v100M671 302v99M681 311v81" stroke="#0a2f40" stroke-width="1.300"/>
<path d="M412 276.500h25V301h-25zM412 401h25v25.500h-25z" fill="#465047" stroke="#c9cfb5"/>
<g clip-path="url(#c1)" stroke="#e2e6da" stroke-width="1.200"><path d="m404 301 12-25m-3 25 12-25m-3 25 12-25m-3 25 12-25M404 426l12-25m-3 25 12-25m-3 25 12-25m-3 25 12-25"/></g>
<path d="M437 301v-40l10-9.500h80l10 9.500v40zM437 401v40l10 10h80l10-10v-40z" fill="#cbb06b" stroke="#f3edb2"/>
<g clip-path="url(#c2)" stroke="#f2df98" stroke-width="1.200"><path d="m409 251 35 50m-18-50 35 50m-18-50 35 50m-17-50 35 50m-18-50 35 50m-17-50 35 50m-18-50 35 50M409 401l35 50m-18-50 35 50m-17-50 35 50m-18-50 35 50m-17-50 35 50m-18-50 35 50m-17-50 35 50m-18-50 35 50"/></g>
<path d="M541.500 276.500h75V301h-75zM541.500 401.500h75v25h-75z" fill="#123f10"/>
<path d="M541.500 276.500h75V301h-75zM541.500 401.500h75v25h-75z" fill="url(#h3)" stroke="#e5efaa"/>
<path d="M616.500 281.500h15V306h-15zM616.500 396.500h15V421h-15z" fill="#d40d12" stroke="#f0c8a0"/>
<path d="m617 292 14-1M617 303l14-2M617 401l14-1M617 411l14-1" stroke="#f6c9b5"/>
</svg>
<div class="dlg" role="dialog" aria-label="公差分析管理器">
<div class="dlg-title d-flex align-items-center justify-content-center">公差分析管理器<button class="btn" aria-label="关闭"><svg width="9" height="16"><path d="m1 4 7 8M8 4l-7 8" stroke="#8d8f91" stroke-width="2"/></svg></button></div>
<textarea aria-label="公差列表"></textarea>
<div class="tools d-flex justify-content-center">
<button class="btn lit add" aria-label="添加"><svg width="12" height="12"><use href="#plus"/></svg><span class="redbox"></span></button>
<button class="btn" aria-label="移除"><svg width="14" height="14"><path d="M1 7h12" stroke="#a5a5a5" stroke-width="4"/></svg></button>
<button class="btn" aria-label="编辑"><svg width="20" height="20"><use href="#pen"/></svg></button>
<button class="btn" aria-label="测量"><svg width="18" height="20"><use href="#xr"/></svg></button>
<button class="btn" aria-label="复制"><svg class="ic"><use href="#cpy"/></svg></button>
<button class="btn lit" aria-label="检查"><svg width="22" height="20"><use href="#gchk"/></svg></button>
</div>
<div class="text-center"><button class="btn closebtn">关闭</button></div>
</div>
</section>
</main>

<footer class="status d-flex align-items-end">
<div class="toggles d-flex align-items-center">
<button class="btn sq" aria-label="模型树"><svg width="14" height="16"><use href="#tree"/></svg></button>
<button class="btn" aria-label="浏览器"><svg width="18" height="18"><use href="#globe"/></svg></button>
<button class="btn" aria-label="全屏"><svg width="16" height="16"><path d="M.5.5h15v15H.5z" fill="url(#gb)" fill-opacity=".35" stroke="#1f6a86"/></svg></button>
<span class="vsep"></span>
</div>
<ul class="msgs list-unstyled mb-0"><li>将显示基准面。</li><li>基准平面将不显示。</li><li>&nbsp;dbg_err_crash() - continuing from serious error (ORDER_DEBUG).</li></ul>
<div class="picks ms-auto d-flex align-items-center">
<span class="vsep"></span><span class="vsep"></span>
<div class="d-flex"><button class="btn sq find" aria-label="查找"><svg width="18" height="16"><use href="#bino"/></svg></button><button class="btn sq findopt" aria-label="查找选项"><i class="tri"></i></button></div>
<span class="vsep"></span>
<button class="btn sq pick" aria-label="选择"><svg width="22" height="18"><use href="#cubes"/></svg></button>
<div class="position-relative d-flex align-items-center"><select class="filter" aria-label="过滤器"><option>我的过滤器</option></select><i class="tri position-absolute end-0 me-1"></i></div>
</div>
<div class="logo"><svg width="60" height="60"><ellipse cx="22" cy="26" rx="14" ry="25" transform="rotate(-42 22 26)" stroke="#8d9db5" stroke-width="3" opacity=".8"/><ellipse cx="40" cy="38" rx="14" ry="21" transform="rotate(28 40 38)" stroke="#df7d88" stroke-width="4" opacity=".75"/></svg>
<span class="logo-name">野火论坛</span><span class="logo-url">www.proewildfire.cn</span></div>
</footer>
</div>
<svg class="orb" width="32" height="6"><ellipse cx="16" cy="12" rx="14" ry="11" fill="#b5cde4" stroke="#2e5e8e" stroke-width="1.500"/></svg>
<script src="https://cdn.jsdelivr.net/npm/bootstrap@5.3.0/dist/js/bootstrap.bundle.min.js"></script>
</body>
</html>
